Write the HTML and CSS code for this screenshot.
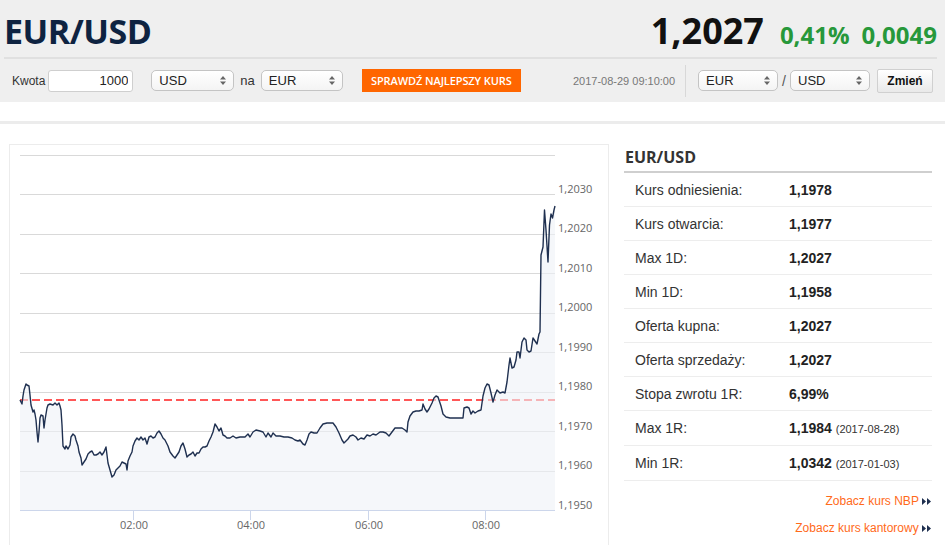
FILE: index.html
```html
<!DOCTYPE html>
<html lang="pl">
<head>
    <meta charset="UTF-8">
    <meta name="viewport" content="width=device-width, initial-scale=1.0">
    <title>EUR/USD</title>
    <link rel="stylesheet" href="styles.css">
</head>
<body>
    <div class="quote-header">
        <div class="title-row">
            <h1>EUR/USD</h1>
            <div class="quote">
                <span class="price">1,2027</span>
                <span class="change">0,41%</span>
                <span class="change">0,0049</span>
            </div>
        </div>

        <div class="controls">
            <label class="amount-label" for="amount">Kwota</label>
            <input class="amount" id="amount" type="text" value="1000">

            <div class="select select-from">USD
                <svg class="arrows" width="6" height="9" viewBox="0 0 6 9"><path d="M3 0L6 3.5H0z M3 9L0 5.5H6z" fill="#666"/></svg>
            </div>
            <span class="word">na</span>
            <div class="select select-to">EUR
                <svg class="arrows" width="6" height="9" viewBox="0 0 6 9"><path d="M3 0L6 3.5H0z M3 9L0 5.5H6z" fill="#666"/></svg>
            </div>

            <button class="best-rate">SPRAWDŹ NAJLEPSZY KURS</button>

            <span class="timestamp">2017-08-29 09:10:00</span>
            <span class="divider"></span>

            <div class="select select-pair">EUR
                <svg class="arrows" width="6" height="9" viewBox="0 0 6 9"><path d="M3 0L6 3.5H0z M3 9L0 5.5H6z" fill="#666"/></svg>
            </div>
            <span class="slash">/</span>
            <div class="select select-pair">USD
                <svg class="arrows" width="6" height="9" viewBox="0 0 6 9"><path d="M3 0L6 3.5H0z M3 9L0 5.5H6z" fill="#666"/></svg>
            </div>
            <button class="change-btn">Zmień</button>
        </div>
    </div>

    <div class="band"></div>

    <div class="main">
        <div class="chart-panel">
            <svg class="chart" width="598" height="420" viewBox="10 145 598 420">
                <g stroke="#d9d9d9" stroke-width="1">
                    <line x1="20" y1="155.5" x2="555" y2="155.5"/>
                    <line x1="20" y1="194.5" x2="555" y2="194.5"/>
                    <line x1="20" y1="234.5" x2="555" y2="234.5"/>
                    <line x1="20" y1="273.5" x2="555" y2="273.5"/>
                    <line x1="20" y1="313.5" x2="555" y2="313.5"/>
                    <line x1="20" y1="352.5" x2="555" y2="352.5"/>
                    <line x1="20" y1="392.5" x2="555" y2="392.5"/>
                    <line x1="20" y1="431.5" x2="555" y2="431.5"/>
                    <line x1="20" y1="471.5" x2="555" y2="471.5"/>
                </g>

                <line x1="20" y1="400" x2="555" y2="400" stroke="#ff2020" stroke-width="1.5" stroke-dasharray="8,4"/>

                <polygon id="area" fill="#eef1f6" fill-opacity="0.6" points=""/>
                <polyline id="line" fill="none" stroke="#1f3050" stroke-width="1.4" stroke-linejoin="round" points=""/>

                <g stroke="#ccd6eb" stroke-width="1">
                    <line x1="20" y1="510.5" x2="555" y2="510.5"/>
                    <line x1="133.5" y1="510" x2="133.5" y2="520"/>
                    <line x1="250.5" y1="510" x2="250.5" y2="520"/>
                    <line x1="368.5" y1="510" x2="368.5" y2="520"/>
                    <line x1="485.5" y1="510" x2="485.5" y2="520"/>
                </g>

                <g class="axis-label">
                    <text x="558" y="192.5">1,2030</text>
                    <text x="558" y="232">1,2020</text>
                    <text x="558" y="271.5">1,2010</text>
                    <text x="558" y="311">1,2000</text>
                    <text x="558" y="350.5">1,1990</text>
                    <text x="558" y="390">1,1980</text>
                    <text x="558" y="429.5">1,1970</text>
                    <text x="558" y="469">1,1960</text>
                    <text x="558" y="508.5">1,1950</text>
                </g>
                <g class="axis-label" text-anchor="middle">
                    <text x="134" y="529">02:00</text>
                    <text x="251" y="529">04:00</text>
                    <text x="369" y="529">06:00</text>
                    <text x="486" y="529">08:00</text>
                </g>
            </svg>
        </div>

        <div class="stats">
            <h2>EUR/USD</h2>
            <div class="row"><span class="label">Kurs odniesienia:</span><span class="value">1,1978</span></div>
            <div class="row"><span class="label">Kurs otwarcia:</span><span class="value">1,1977</span></div>
            <div class="row"><span class="label">Max 1D:</span><span class="value">1,2027</span></div>
            <div class="row"><span class="label">Min 1D:</span><span class="value">1,1958</span></div>
            <div class="row"><span class="label">Oferta kupna:</span><span class="value">1,2027</span></div>
            <div class="row"><span class="label">Oferta sprzedaży:</span><span class="value">1,2027</span></div>
            <div class="row"><span class="label">Stopa zwrotu 1R:</span><span class="value">6,99%</span></div>
            <div class="row row-dated"><span class="label">Max 1R:</span><span class="value">1,1984 <small>(2017-08-28)</small></span></div>
            <div class="row row-dated"><span class="label">Min 1R:</span><span class="value">1,0342 <small>(2017-01-03)</small></span></div>

            <div class="links">
                <a href="#">Zobacz kurs NBP <svg class="more" width="10" height="7" viewBox="0 0 10 7"><path d="M0 0L4 3.5L0 7z M5 0L9 3.5L5 7z" fill="#1f3050"/></svg></a>
                <a href="#">Zobacz kurs kantorowy <svg class="more" width="10" height="7" viewBox="0 0 10 7"><path d="M0 0L4 3.5L0 7z M5 0L9 3.5L5 7z" fill="#1f3050"/></svg></a>
            </div>
        </div>
    </div>

    <script>
        // intraday EUR/USD ticks, in chart pixels (x, y)
        const ticks = [
            [20,400],[21,402],[22,404],[23,396],[24,390],[25,387],[26,384],[27,385],[29,386],[30,395],
            [31,405],[33,412],[34,410],[35,414],[36,420],[37,432],[38,442],[39,432],[40,418],[41,415],
            [43,416],[44,428],[45,420],[47,408],[48,405],[50,404],[53,405],[55,403],[57,405],[59,403],
            [60,406],[61,410],[62,425],[63,446],[65,449],[66,446],[68,449],[70,445],[71,437],[73,434],
            [75,436],[76,440],[78,446],[79,452],[81,458],[82,465],[84,462],[86,459],[88,454],[90,452],
            [92,451],[94,455],[96,455],[98,454],[100,452],[102,455],[104,452],[106,447],[107,455],[108,463],
            [110,470],[112,477],[114,475],[116,470],[118,468],[120,466],[122,462],[124,463],[126,464],[127,470],
            [128,461],[130,456],[132,452],[133,446],[135,441],[137,438],[139,440],[141,437],[143,440],[145,438],
            [147,444],[149,437],[151,436],[153,438],[155,437],[157,433],[159,431],[161,434],[163,438],[165,440],
            [168,446],[170,452],[173,456],[175,458],[177,455],[179,452],[181,446],[183,443],[185,449],[187,457],
            [189,455],[191,454],[193,452],[195,456],[197,453],[199,453],[201,449],[203,447],[205,447],[207,446],
            [209,441],[211,437],[213,432],[215,424],[217,427],[219,431],[221,428],[223,435],[225,436],[227,438],
            [230,438],[233,436],[236,438],[240,437],[245,437],[248,434],[250,437],[253,432],[256,430],[260,431],
            [263,432],[266,437],[268,433],[271,437],[273,433],[276,436],[280,436],[284,437],[288,437],[292,438],
            [295,440],[298,441],[300,440],[303,444],[305,445],[307,440],[309,434],[311,432],[314,433],[317,433],
            [320,428],[323,424],[327,423],[333,423],[336,427],[339,433],[342,440],[344,443],[346,441],[348,439],
            [350,436],[353,435],[356,437],[358,440],[361,438],[364,439],[367,435],[370,436],[373,434],[376,435],
            [380,432],[383,432],[386,433],[389,436],[392,432],[395,428],[398,428],[402,428],[405,430],[407,432],
            [408,422],[410,416],[413,412],[416,411],[419,411],[422,410],[423,404],[425,409],[427,412],[429,409],
            [432,403],[434,398],[436,396],[438,397],[439,400],[441,406],[443,414],[446,417],[450,418],[455,418],
            [460,418],[463,418],[464,408],[467,407],[469,408],[471,414],[473,411],[475,413],[478,411],[481,410],
            [483,396],[485,388],[487,384],[489,385],[491,393],[493,402],[495,395],[497,390],[500,393],[503,392],
            [505,393],[507,382],[509,365],[510,358],[512,368],[514,367],[516,360],[517,352],[519,352],[520,358],
            [522,342],[524,338],[526,340],[527,350],[529,352],[531,351],[533,338],[535,341],[537,344],[539,334],
            [540,332],[541,255],[543,247],[544.5,210],[546,230],[548,262],[549.5,225],[551,214],[552.5,218],
            [554,210],[555,206]
        ];

        const pts = ticks.map(p => p.join(",")).join(" ");
        document.getElementById("line").setAttribute("points", pts);
        document.getElementById("area").setAttribute("points", "20,510 " + pts + " 555,510");
    </script>
</body>
</html>
```

FILE: styles.css
```css
body {
    margin: 0;
    font-family: "Liberation Sans", Arial, sans-serif;
    color: #333;
    background-color: #fff;
}

.quote-header {
    background-color: #efefef;
    height: 102px;
    padding: 0 8px 0 4px;
}

.title-row {
    height: 53px;
    padding-top: 4px;
    border-bottom: 2px solid #e0e0e0;
    display: flex;
    justify-content: space-between;
    align-items: center;
}

h1 {
    margin: 0;
    font-family: "Open Sans", sans-serif;
    font-size: 34px;
    font-weight: 700;
    color: #0e2341;
    letter-spacing: -0.5px;
}

.quote {
    font-family: "Open Sans", sans-serif;
    font-weight: 700;
    display: flex;
    align-items: baseline;
}

.price {
    font-size: 36px;
    color: #111;
    margin-right: 4px;
}

.change {
    font-size: 24px;
    color: #27983a;
    margin-left: 12px;
}

.controls {
    height: 43px;
    display: flex;
    align-items: center;
    padding: 0 4px 0 8px;
    font-size: 12px;
}

.amount-label {
    margin-right: 3px;
}

.amount {
    width: 85px;
    height: 22px;
    box-sizing: border-box;
    border: 1px solid #cfcfcf;
    border-radius: 3px;
    text-align: right;
    font-family: inherit;
    font-size: 13px;
    padding: 0 4px;
    color: #222;
}

.select {
    position: relative;
    box-sizing: border-box;
    height: 21px;
    line-height: 19px;
    border: 1px solid #c4c4c4;
    border-radius: 5px;
    background: linear-gradient(#fff, #f4f4f4);
    font-size: 13px;
    color: #222;
    padding-left: 7px;
}

.select .arrows {
    position: absolute;
    right: 7px;
    top: 5px;
}

.select-from {
    width: 83px;
    margin-left: 18px;
}

.select-to {
    width: 82px;
}

.word {
    margin: 0 6px;
    font-size: 13px;
}

.best-rate {
    margin-left: 19px;
    width: 159px;
    height: 23px;
    border: none;
    background-color: #ff6600;
    color: #fff;
    font-family: "Open Sans", sans-serif;
    font-weight: 600;
    font-size: 11px;
    letter-spacing: -0.1px;
    padding: 0;
    cursor: pointer;
}

.timestamp {
    margin-left: auto;
    color: #777;
    font-size: 11px;
}

.divider {
    width: 1px;
    height: 32px;
    background-color: #d8d8d8;
    margin: 0 12px 0 10px;
}

.select-pair {
    width: 80px;
}

.slash {
    margin: 0 4px;
    font-size: 14px;
    color: #555;
}

.change-btn {
    margin-left: 7px;
    width: 56px;
    height: 24px;
    border: 1px solid #d0d0d0;
    border-radius: 2px;
    background: linear-gradient(#fff, #e9e9e9);
    font-family: inherit;
    font-weight: 700;
    font-size: 12px;
    color: #111;
    padding: 0;
}

.band {
    margin-top: 19px;
    height: 3px;
    background-color: #ececec;
}

.main {
    display: flex;
    align-items: flex-start;
    padding: 20px 0 0 9px;
    gap: 15px;
}

.chart-panel {
    border: 1px solid #ececec;
    width: 598px;
}

.chart {
    display: block;
}

.axis-label {
    font-family: "Open Sans", sans-serif;
    font-size: 11px;
    fill: #666;
}

.stats {
    width: 308px;
}

.stats h2 {
    margin: 0;
    height: 27px;
    line-height: 27px;
    border-bottom: 2px solid #cfcfcf;
    font-family: "Open Sans", sans-serif;
    font-size: 16px;
    font-weight: 700;
    color: #333;
    padding-left: 1px;
}

.row {
    display: grid;
    grid-template-columns: 165px 1fr;
    align-items: center;
    height: 33px;
    border-bottom: 1px solid #ededed;
    font-size: 14px;
}

.row-dated {
    height: 34px;
}

.label {
    padding-left: 11px;
    color: #333;
}

.value {
    font-weight: 700;
    color: #222;
}

.value small {
    font-weight: 400;
    font-size: 11px;
    color: #333;
}

.links {
    margin-top: 7px;
    text-align: right;
}

.links a {
    display: block;
    line-height: 27px;
    font-size: 12px;
    color: #ff6a1a;
    text-decoration: none;
}

.more {
    vertical-align: 0;
}
```
